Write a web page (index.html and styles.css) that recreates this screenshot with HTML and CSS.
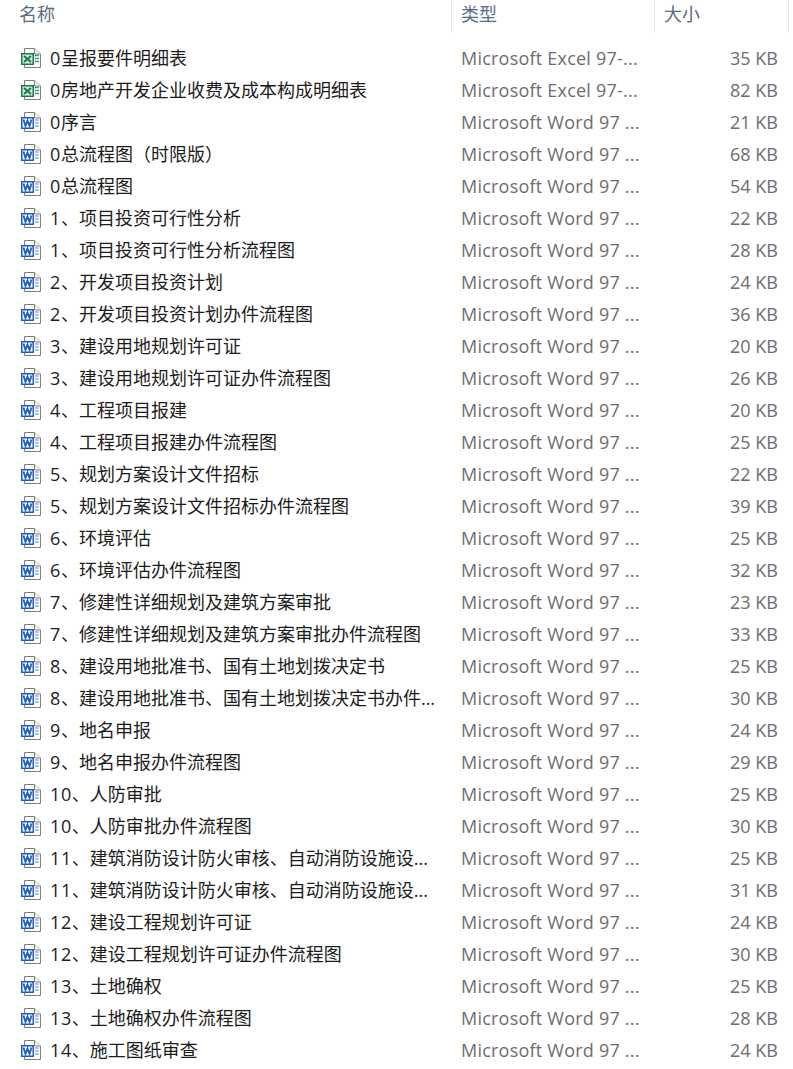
FILE: index.html
```html
<!DOCTYPE html>
<html lang="zh-CN">
<head>
<meta charset="utf-8">
<title>文件列表</title>
<link rel="stylesheet" href="styles.css">
</head>
<body>
<svg class="defs" width="0" height="0" aria-hidden="true">
  <symbol id="page" viewBox="0 0 20 20">
    <path d="M3.5 .5H13.5L19.5 6V19.5H3.5Z" fill="#fff" stroke="#808080"/>
    <path d="M13.5 .5V6H19.5" fill="#f0f0f0" stroke="#808080"/>
  </symbol>
  <symbol id="xls" viewBox="0 0 20 20">
    <use href="#page"/>
    <rect x=".75" y="5.75" width="11.5" height="10.5" fill="#d8ecdd" stroke="#18794a" stroke-width="1.5"/>
    <path d="M3 8L10 14M10 8L3 14" stroke="#18794a" stroke-width="2.2"/>
    <path d="M14 7.5h4M14 10.5h4M14 13.5h4" stroke="#18794a" stroke-width="1.6" stroke-dasharray="1.6 .6"/>
  </symbol>
  <symbol id="doc" viewBox="0 0 20 20">
    <use href="#page"/>
    <rect x=".75" y="5.75" width="11.5" height="10.5" fill="#fff" stroke="#1b5ec4" stroke-width="1.5"/>
    <path d="M2.5 7.5L4.5 14L6.5 8.5L8.5 14L10.5 7.5" fill="none" stroke="#1b5ec4" stroke-width="1.8"/>
    <path d="M14 8h4M14 11h4M14 14h4" stroke="#5b8fdc"/>
  </symbol>
</svg>
<main class="list">
  <header class="head">
    <div class="h-name">名称</div>
    <div class="h-type">类型</div>
    <div class="h-size">大小</div>
  </header>
  <div class="rows">
    <div class="row"><svg class="ic"><use href="#xls"/></svg><span class="name"><b class="n">0</b>呈报要件明细表</span><span class="type">Microsoft Excel 97-...</span><span class="size">35 KB</span></div>
    <div class="row"><svg class="ic"><use href="#xls"/></svg><span class="name"><b class="n">0</b>房地产开发企业收费及成本构成明细表</span><span class="type">Microsoft Excel 97-...</span><span class="size">82 KB</span></div>
    <div class="row"><svg class="ic"><use href="#doc"/></svg><span class="name"><b class="n">0</b>序言</span><span class="type">Microsoft Word 97 ...</span><span class="size">21 KB</span></div>
    <div class="row"><svg class="ic"><use href="#doc"/></svg><span class="name"><b class="n">0</b>总流程图（时限版）</span><span class="type">Microsoft Word 97 ...</span><span class="size">68 KB</span></div>
    <div class="row"><svg class="ic"><use href="#doc"/></svg><span class="name"><b class="n">0</b>总流程图</span><span class="type">Microsoft Word 97 ...</span><span class="size">54 KB</span></div>
    <div class="row"><svg class="ic"><use href="#doc"/></svg><span class="name"><b class="n">1</b>、项目投资可行性分析</span><span class="type">Microsoft Word 97 ...</span><span class="size">22 KB</span></div>
    <div class="row"><svg class="ic"><use href="#doc"/></svg><span class="name"><b class="n">1</b>、项目投资可行性分析流程图</span><span class="type">Microsoft Word 97 ...</span><span class="size">28 KB</span></div>
    <div class="row"><svg class="ic"><use href="#doc"/></svg><span class="name"><b class="n">2</b>、开发项目投资计划</span><span class="type">Microsoft Word 97 ...</span><span class="size">24 KB</span></div>
    <div class="row"><svg class="ic"><use href="#doc"/></svg><span class="name"><b class="n">2</b>、开发项目投资计划办件流程图</span><span class="type">Microsoft Word 97 ...</span><span class="size">36 KB</span></div>
    <div class="row"><svg class="ic"><use href="#doc"/></svg><span class="name"><b class="n">3</b>、建设用地规划许可证</span><span class="type">Microsoft Word 97 ...</span><span class="size">20 KB</span></div>
    <div class="row"><svg class="ic"><use href="#doc"/></svg><span class="name"><b class="n">3</b>、建设用地规划许可证办件流程图</span><span class="type">Microsoft Word 97 ...</span><span class="size">26 KB</span></div>
    <div class="row"><svg class="ic"><use href="#doc"/></svg><span class="name"><b class="n">4</b>、工程项目报建</span><span class="type">Microsoft Word 97 ...</span><span class="size">20 KB</span></div>
    <div class="row"><svg class="ic"><use href="#doc"/></svg><span class="name"><b class="n">4</b>、工程项目报建办件流程图</span><span class="type">Microsoft Word 97 ...</span><span class="size">25 KB</span></div>
    <div class="row"><svg class="ic"><use href="#doc"/></svg><span class="name"><b class="n">5</b>、规划方案设计文件招标</span><span class="type">Microsoft Word 97 ...</span><span class="size">22 KB</span></div>
    <div class="row"><svg class="ic"><use href="#doc"/></svg><span class="name"><b class="n">5</b>、规划方案设计文件招标办件流程图</span><span class="type">Microsoft Word 97 ...</span><span class="size">39 KB</span></div>
    <div class="row"><svg class="ic"><use href="#doc"/></svg><span class="name"><b class="n">6</b>、环境评估</span><span class="type">Microsoft Word 97 ...</span><span class="size">25 KB</span></div>
    <div class="row"><svg class="ic"><use href="#doc"/></svg><span class="name"><b class="n">6</b>、环境评估办件流程图</span><span class="type">Microsoft Word 97 ...</span><span class="size">32 KB</span></div>
    <div class="row"><svg class="ic"><use href="#doc"/></svg><span class="name"><b class="n">7</b>、修建性详细规划及建筑方案审批</span><span class="type">Microsoft Word 97 ...</span><span class="size">23 KB</span></div>
    <div class="row"><svg class="ic"><use href="#doc"/></svg><span class="name"><b class="n">7</b>、修建性详细规划及建筑方案审批办件流程图</span><span class="type">Microsoft Word 97 ...</span><span class="size">33 KB</span></div>
    <div class="row"><svg class="ic"><use href="#doc"/></svg><span class="name"><b class="n">8</b>、建设用地批准书、国有土地划拨决定书</span><span class="type">Microsoft Word 97 ...</span><span class="size">25 KB</span></div>
    <div class="row"><svg class="ic"><use href="#doc"/></svg><span class="name"><b class="n">8</b>、建设用地批准书、国有土地划拨决定书办件...</span><span class="type">Microsoft Word 97 ...</span><span class="size">30 KB</span></div>
    <div class="row"><svg class="ic"><use href="#doc"/></svg><span class="name"><b class="n">9</b>、地名申报</span><span class="type">Microsoft Word 97 ...</span><span class="size">24 KB</span></div>
    <div class="row"><svg class="ic"><use href="#doc"/></svg><span class="name"><b class="n">9</b>、地名申报办件流程图</span><span class="type">Microsoft Word 97 ...</span><span class="size">29 KB</span></div>
    <div class="row"><svg class="ic"><use href="#doc"/></svg><span class="name"><b class="n">10</b>、人防审批</span><span class="type">Microsoft Word 97 ...</span><span class="size">25 KB</span></div>
    <div class="row"><svg class="ic"><use href="#doc"/></svg><span class="name"><b class="n">10</b>、人防审批办件流程图</span><span class="type">Microsoft Word 97 ...</span><span class="size">30 KB</span></div>
    <div class="row"><svg class="ic"><use href="#doc"/></svg><span class="name"><b class="n">11</b>、建筑消防设计防火审核、自动消防设施设...</span><span class="type">Microsoft Word 97 ...</span><span class="size">25 KB</span></div>
    <div class="row"><svg class="ic"><use href="#doc"/></svg><span class="name"><b class="n">11</b>、建筑消防设计防火审核、自动消防设施设...</span><span class="type">Microsoft Word 97 ...</span><span class="size">31 KB</span></div>
    <div class="row"><svg class="ic"><use href="#doc"/></svg><span class="name"><b class="n">12</b>、建设工程规划许可证</span><span class="type">Microsoft Word 97 ...</span><span class="size">24 KB</span></div>
    <div class="row"><svg class="ic"><use href="#doc"/></svg><span class="name"><b class="n">12</b>、建设工程规划许可证办件流程图</span><span class="type">Microsoft Word 97 ...</span><span class="size">30 KB</span></div>
    <div class="row"><svg class="ic"><use href="#doc"/></svg><span class="name"><b class="n">13</b>、土地确权</span><span class="type">Microsoft Word 97 ...</span><span class="size">25 KB</span></div>
    <div class="row"><svg class="ic"><use href="#doc"/></svg><span class="name"><b class="n">13</b>、土地确权办件流程图</span><span class="type">Microsoft Word 97 ...</span><span class="size">28 KB</span></div>
    <div class="row"><svg class="ic"><use href="#doc"/></svg><span class="name"><b class="n">14</b>、施工图纸审查</span><span class="type">Microsoft Word 97 ...</span><span class="size">24 KB</span></div>
  </div>
</main>
</body>
</html>
```
FILE: styles.css
```css
html, body {
  margin: 0;
  background: #fff;
}
body {
  height: 1069px;
  overflow: hidden;
  font-family: "Open Sans", "Noto Sans CJK SC", sans-serif;
  font-size: 18px;
}
.defs {
  position: absolute;
}
.head {
  display: grid;
  grid-template-columns: 451px 203px 135px;
  height: 33px;
  color: #5b6b80;
  line-height: 28px;
}
.h-name {
  padding-left: 19px;
}
.h-type {
  padding-left: 9px;
  border-left: 1px solid #e5e5e5;
}
.h-size {
  padding-left: 9px;
  border-left: 1px solid #e5e5e5;
  border-right: 1px solid #e5e5e5;
}
.rows {
  padding-top: 9px;
}
.row {
  display: flex;
  align-items: center;
  height: 32px;
  line-height: 32px;
  white-space: nowrap;
}
.ic {
  width: 20px;
  height: 20px;
  margin-left: 21px;
  flex: none;
}
.name {
  width: 411px;
  margin-left: 9px;
  color: #1c1c1c;
}
.n {
  font-weight: 400;
  letter-spacing: 0.6px;
}
.type {
  width: 247px;
  color: #6d6d6d;
  letter-spacing: 0.22px;
}
.size {
  width: 70px;
  text-align: right;
  color: #6d6d6d;
}
```
